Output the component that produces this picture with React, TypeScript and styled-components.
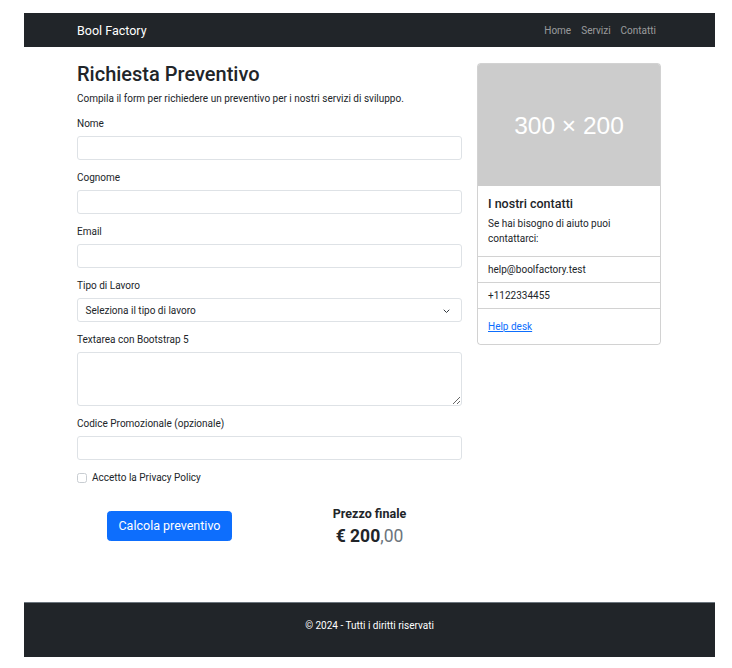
import React from "react";
import styled, { createGlobalStyle } from "styled-components";

const Global = createGlobalStyle`
  html, body { margin: 0; padding: 0; background: #fff; }
  body {
    font-family: Roboto, "Liberation Sans", sans-serif;
    font-size: 10px;
    line-height: 15px;
    color: #212529;
  }
  * { box-sizing: border-box; }
`;

const Page = styled.div`
  height: 668px;
  padding: 13px 17px 11px 24px;
  display: flex;
  flex-direction: column;
`;

const NavBar = styled.nav`
  background: #212529;
  height: 34px;
  display: flex;
  align-items: center;
`;

const Container = styled.div`
  width: 584px;
  margin: 0 0 0 53px;
`;

const NavInner = styled(Container)`
  display: flex;
  align-items: center;
  justify-content: space-between;
`;

const Brand = styled.a`
  color: #fff;
  font-size: 12.5px;
  line-height: 19px;
  text-decoration: none;
`;

const NavLinks = styled.div`
  display: flex;
`;

const NavLink = styled.a`
  color: rgba(255, 255, 255, 0.55);
  font-size: 10px;
  padding: 0 5px;
  text-decoration: none;
`;

const Main = styled.main`
  flex: 1;
  padding-top: 15px;
`;

const Columns = styled(Container)`
  display: grid;
  grid-template-columns: 385px 184px;
  column-gap: 15px;
  align-items: start;
`;

const Title = styled.h2`
  margin: 0 0 5px;
  font-size: 20px;
  line-height: 24px;
  font-weight: 500;
`;

const Lead = styled.p`
  margin: 0 0 10px;
`;

const Field = styled.div`
  margin-bottom: 10px;
`;

const Label = styled.label`
  display: block;
  margin-bottom: 5px;
`;

const Input = styled.input`
  display: block;
  width: 100%;
  height: 24px;
  border: 1px solid #dee2e6;
  border-radius: 3px;
  background: #fff;
  font: inherit;
  padding: 0 7.5px;
`;

const SelectBox = styled.div`
  position: relative;
  height: 24px;
  border: 1px solid #dee2e6;
  border-radius: 3px;
  display: flex;
  align-items: center;
  padding: 0 7.5px;
`;

const Chevron = styled.svg`
  position: absolute;
  right: 11px;
  top: 9.5px;
`;

const TextArea = styled.textarea`
  display: block;
  width: 100%;
  height: 54px;
  border: 1px solid #dee2e6;
  border-radius: 3px;
  font: inherit;
  padding: 3.75px 7.5px;
  resize: vertical;
`;

const Check = styled.div`
  display: flex;
  align-items: center;
  gap: 5px;
  margin-bottom: 10px;
`;

const CheckInput = styled.input`
  appearance: none;
  width: 10px;
  height: 10px;
  margin: 0;
  border: 1px solid #c8cdd2;
  border-radius: 2.5px;
  background: #fff;
`;

const ActionRow = styled.div`
  display: grid;
  grid-template-columns: 1fr 1fr;
  margin: 20.5px -7.5px 0;
  align-items: center;
`;

const Cell = styled.div`
  text-align: center;
`;

const PrimaryButton = styled.button`
  background: #0d6efd;
  color: #fff;
  border: 1px solid #0d6efd;
  border-radius: 3.5px;
  font-family: inherit;
  font-size: 12.5px;
  line-height: 18.75px;
  padding: 4.6px 10px;
`;

const PriceLabel = styled.h5`
  margin: 0 0 5px;
  font-size: 12.5px;
  line-height: 15px;
  font-weight: 700;
`;

const Price = styled.h3`
  margin: 0;
  font-size: 17.5px;
  line-height: 21px;
  font-weight: 700;
`;

const Cents = styled.span`
  font-weight: 400;
  color: #6c757d;
`;

const Card = styled.div`
  margin-top: 1px;
  border: 1px solid rgba(0, 0, 0, 0.175);
  border-radius: 3.5px;
  overflow: hidden;
`;

const Placeholder = styled.div`
  height: 122px;
  background: #cccccc;
  color: #fff;
  display: flex;
  align-items: center;
  justify-content: center;
  font-family: "Liberation Sans", Arial, sans-serif;
  font-size: 24.5px;
`;

const CardBody = styled.div`
  padding: 10px;
`;

const CardTitle = styled.h5`
  margin: 0 0 5px;
  font-size: 12.5px;
  line-height: 15px;
  font-weight: 500;
`;

const CardText = styled.p`
  margin: 0;
`;

const ListItem = styled.div`
  border-top: 1px solid rgba(0, 0, 0, 0.175);
  padding: 5px 10px;
`;

const LinkBody = styled(CardBody)`
  border-top: 1px solid rgba(0, 0, 0, 0.175);
`;

const CardLink = styled.a`
  color: #0d6efd;
  text-decoration: underline;
`;

const Footer = styled.footer`
  background: #212529;
  border-top: 1px solid #6c757d;
  height: 55px;
  padding-top: 15px;
  text-align: center;
  color: #fff;
`;

export default function App() {
  return (
    <>
      <Global />
      <Page>
        <NavBar>
          <NavInner>
            <Brand href="#">Bool Factory</Brand>
            <NavLinks>
              <NavLink href="#">Home</NavLink>
              <NavLink href="#">Servizi</NavLink>
              <NavLink href="#">Contatti</NavLink>
            </NavLinks>
          </NavInner>
        </NavBar>
        <Main>
          <Columns>
            <form>
              <Title>Richiesta Preventivo</Title>
              <Lead>Compila il form per richiedere un preventivo per i nostri servizi di sviluppo.</Lead>
              <Field>
                <Label>Nome</Label>
                <Input type="text" />
              </Field>
              <Field>
                <Label>Cognome</Label>
                <Input type="text" />
              </Field>
              <Field>
                <Label>Email</Label>
                <Input type="email" />
              </Field>
              <Field>
                <Label>Tipo di Lavoro</Label>
                <SelectBox>
                  Seleziona il tipo di lavoro
                  <Chevron width="7" height="5" viewBox="0 0 7 5">
                    <path d="M1 1l2.5 2.5L6 1" fill="none" stroke="#343a40" strokeWidth="1" strokeLinecap="round" strokeLinejoin="round" />
                  </Chevron>
                </SelectBox>
              </Field>
              <Field>
                <Label>Textarea con Bootstrap 5</Label>
                <TextArea rows={3} />
              </Field>
              <Field>
                <Label>Codice Promozionale (opzionale)</Label>
                <Input type="text" />
              </Field>
              <Check>
                <CheckInput type="checkbox" />
                <span>Accetto la Privacy Policy</span>
              </Check>
              <ActionRow>
                <Cell>
                  <PrimaryButton type="button">Calcola preventivo</PrimaryButton>
                </Cell>
                <Cell>
                  <PriceLabel>Prezzo finale</PriceLabel>
                  <Price>
                    € 200<Cents>,00</Cents>
                  </Price>
                </Cell>
              </ActionRow>
            </form>
            <Card>
              <Placeholder>300 × 200</Placeholder>
              <CardBody>
                <CardTitle>I nostri contatti</CardTitle>
                <CardText>Se hai bisogno di aiuto puoi contattarci:</CardText>
              </CardBody>
              <ListItem>help@boolfactory.test</ListItem>
              <ListItem>+1122334455</ListItem>
              <LinkBody>
                <CardLink href="#">Help desk</CardLink>
              </LinkBody>
            </Card>
          </Columns>
        </Main>
        <Footer>© 2024 - Tutti i diritti riservati</Footer>
      </Page>
    </>
  );
}
